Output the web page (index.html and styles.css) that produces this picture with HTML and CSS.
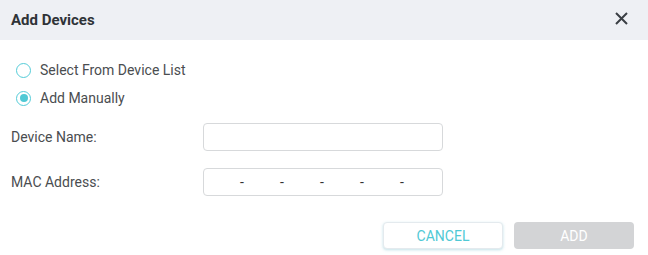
FILE: index.html
```html
<!DOCTYPE html>
<html lang="en">
<head>
  <meta charset="UTF-8">
  <title>Add Devices</title>
  <link rel="stylesheet" href="styles.css">
</head>
<body>
  <div class="dialog">
    <div class="dialog-header">
      <h3>Add Devices</h3>
      <button class="close" aria-label="Close">
        <svg width="13" height="13" viewBox="0 0 13 13"><path d="M1 1 L12 12 M12 1 L1 12" stroke="#3a3f44" stroke-width="2" fill="none"/></svg>
      </button>
    </div>
    <div class="dialog-body">
      <div class="radio-group">
        <label class="radio"><span class="dot"></span> Select From Device List</label>
        <label class="radio checked"><span class="dot"></span> Add Manually</label>
      </div>
      <div class="field">
        <span class="field-label">Device Name:</span>
        <div class="input"></div>
      </div>
      <div class="field">
        <span class="field-label">MAC Address:</span>
        <div class="input mac">
          <span class="seg"></span><span class="sep">-</span>
          <span class="seg"></span><span class="sep">-</span>
          <span class="seg"></span><span class="sep">-</span>
          <span class="seg"></span><span class="sep">-</span>
          <span class="seg"></span><span class="sep">-</span>
          <span class="seg"></span>
        </div>
      </div>
    </div>
    <div class="dialog-footer">
      <button class="btn cancel">CANCEL</button>
      <button class="btn add" disabled>ADD</button>
    </div>
  </div>
</body>
</html>
```

FILE: styles.css
```css
body {
  margin: 0;
  font-family: Roboto, "Liberation Sans", sans-serif;
  background: #fff;
  color: #4a4d50;
}

.dialog {
  width: 648px;
  height: 255px;
  background: #fff;
}

.dialog-header {
  height: 40px;
  background: #eef0f4;
  display: flex;
  align-items: center;
  justify-content: space-between;
  padding: 0 20px 0 11px;
}

.dialog-header h3 {
  margin: 0;
  font-size: 15px;
  font-weight: bold;
  color: #2f3337;
}

.close {
  border: none;
  background: none;
  padding: 0;
  width: 13px;
  height: 13px;
  display: flex;
  margin-top: -4px;
}

.dialog-body {
  padding: 16px 11px 0;
}

.radio-group {
  display: flex;
  flex-direction: column;
  margin-bottom: 11px;
}

.radio {
  height: 28px;
  display: flex;
  align-items: center;
  gap: 9px;
  font-size: 14px;
  color: #4a4d50;
  padding-left: 5px;
}

.dot {
  width: 15px;
  height: 15px;
  box-sizing: border-box;
  border: 1.5px solid #54ccd8;
  border-radius: 50%;
  display: flex;
  align-items: center;
  justify-content: center;
}

.radio.checked .dot::after {
  content: "";
  width: 8px;
  height: 8px;
  border-radius: 50%;
  background: #4fc9d5;
}

.field {
  display: flex;
  align-items: center;
  margin-bottom: 17px;
}

.field-label {
  width: 192px;
  font-size: 14px;
  color: #4a4d50;
}

.input {
  width: 240px;
  height: 28px;
  box-sizing: border-box;
  border: 1px solid #d7d9db;
  border-radius: 4px;
  background: #fff;
}

.mac {
  display: flex;
  align-items: center;
  padding-left: 1px;
}

.mac .seg {
  width: 34px;
}

.mac .sep {
  width: 6px;
  font-size: 14px;
  color: #333;
  text-align: center;
}

.dialog-footer {
  display: flex;
  justify-content: flex-end;
  gap: 11px;
  padding: 9px 14px 0;
}

.btn {
  width: 120px;
  height: 27px;
  border-radius: 4px;
  font-family: Roboto, "Liberation Sans", sans-serif;
  font-size: 14px;
  cursor: pointer;
}

.btn.cancel {
  background: #fff;
  color: #4fc9d5;
  border: 1px solid #e4eaee;
  box-shadow: 0 1px 3px rgba(80, 170, 190, 0.35);
}

.btn.add {
  background: #d3d4d6;
  color: #fff;
  border: none;
}
```
